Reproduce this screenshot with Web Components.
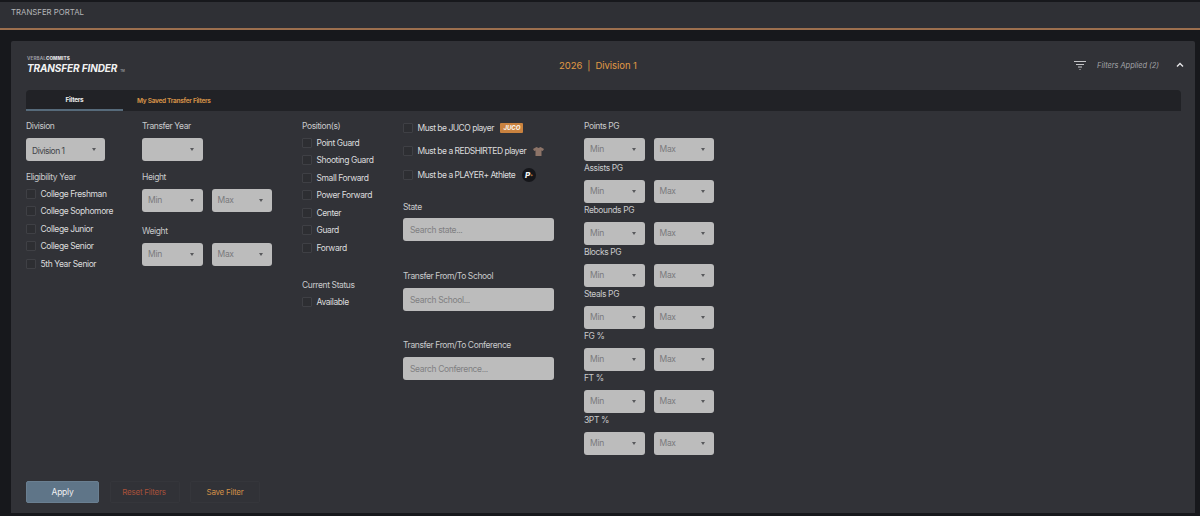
<!DOCTYPE html>
<html lang="en">
<head>
<meta charset="utf-8">
<title>Transfer Portal</title>
<style>
  html, body { margin: 0; padding: 0; height: 516px; overflow: hidden; background: #17181c; }
  body { font-family: Inter, "Liberation Sans", sans-serif; color: #d6d6d8; }
</style>
</head>
<body>
<portal-page></portal-page>
<script>
// small helper so each component is just a class with a css + html string
function comp(name, css, html) {
  class C extends HTMLElement {
    connectedCallback() {
      if (this.shadowRoot) return;
      this.attachShadow({ mode: 'open' });
      var a = {};
      for (var i = 0; i < this.attributes.length; i++) a[this.attributes[i].name] = this.attributes[i].value;
      this.shadowRoot.innerHTML = '<style>' + css + '</style>' + (typeof html === 'function' ? html(a) : html);
    }
  }
  customElements.define(name, C);
}

comp('top-bar', `
  :host { display: flex; align-items: center; height: 28px; margin-top: 2px; padding: 0 11px 6px; box-sizing: border-box;
          background: #2f3035; font-size: 7.8px; color: #b4b5b8; border-bottom: 2px solid #9c6f4e; }
`, `<span>TRANSFER PORTAL</span>`);

comp('finder-logo', `
  :host { display: block; line-height: 1; margin-top: -2px; margin-left: 1px; }
  .sm { font-size: 4.6px; font-weight: 700; letter-spacing: .1px; color: #9b9ca0; height: 6px; padding-top: 1px; }
  .sm b { color: #d8d8da; }
  .lg { font-size: 10px; font-weight: 700; font-style: italic; letter-spacing: -.12px; color: #f2f2f3; margin-top: 0.5px; }
  .tm { font-size: 3px; font-style: normal; color: #8a8b8f; margin-left: 3px; }
`, `<div class="sm">VERBAL<b>COMMITS</b></div><div class="lg">TRANSFER FINDER<span class="tm">TM</span></div>`);

comp('finder-header', `
  :host { display: flex; align-items: center; height: 49px; position: relative; }
  .mid { position: absolute; left: 0; right: 11px; margin-top: -1px; text-align: center; font-size: 9.5px; color: #e09a45; letter-spacing: -.05px; }
  .mid i { font-style: normal; margin: 0 5px; }
  .right { margin-left: auto; margin-right: -3px; margin-top: -1px; display: flex; align-items: center; font-size: 7.4px; font-style: italic; color: #a3a4a8; }
  .right svg { display: block; }
  .flt { margin-right: 11px; }
  .chev { margin-left: 17px; }
`, `<finder-logo></finder-logo>
  <div class="mid">2026<i>|</i>Division 1</div>
  <div class="right">
    <svg class="flt" width="12" height="10" viewBox="0 0 12 10" fill="none" stroke="#c4c5c8" stroke-width="1"><path d="M0 1.5h12M2 4.5h8M4 7h4M5.5 9.5h1"/></svg>
    <span>Filters Applied (2)</span>
    <svg class="chev" width="8" height="6" viewBox="0 0 8 6" fill="none" stroke="#e6e6e8" stroke-width="1.4"><path d="M1 4.5 4 1.5 7 4.5"/></svg>
  </div>`);

comp('finder-tabs', `
  :host { display: flex; height: 21px; background: #212226; border-radius: 4px 4px 0 0; font-size: 6.5px; font-weight: 700; letter-spacing: -.3px; }
  .tab { display: flex; align-items: center; justify-content: center; }
  .on { width: 97px; color: #eceded; border-bottom: 2px solid #566a7a; box-sizing: border-box; }
  .off { color: #d08f47; margin-left: 14px; }
`, `<div class="tab on">Filters</div><div class="tab off">My Saved Transfer Filters</div>`);

comp('f-label', `
  :host { display: block; font-size: 8.5px; line-height: 12px; height: 12px; color: #c9cacc; letter-spacing: -.4px; white-space: nowrap; }
`, `<slot></slot>`);

comp('f-select', `
  :host { display: inline-flex; align-items: center; justify-content: space-between; box-sizing: border-box; width: 60.5px; height: 22.5px; margin-top: 6px;
          background: #bcbcbc; border-radius: 3px; padding: 0 9px 0 6px; font-size: 8.5px; color: #7a7a7c; letter-spacing: -.3px; flex: none; }
  :host([val]) { color: #434448; letter-spacing: -.5px; }
  :host([val]) span { margin-top: 3px; }
  i { width: 0; height: 0; border: 2.5px solid transparent; border-top: 3px solid #58595c; border-bottom: 0; }
`, `<span><slot></slot></span><i></i>`);

comp('f-pair', `
  :host { display: flex; gap: 9px; }
`, `<f-select>Min</f-select><f-select>Max</f-select>`);

comp('f-check', `
  :host { display: flex; align-items: center; height: 17.5px; font-size: 8.5px; color: #dcdcde; letter-spacing: -.4px; white-space: nowrap; flex: none; }
  .box { width: 8px; height: 8px; margin-right: 4.5px; border: 1px solid #3f4045; background: #2d2e32; border-radius: 1px; flex: none; }
`, `<span class="box"></span><slot></slot>`);

comp('f-search', `
  :host { display: flex; align-items: center; box-sizing: border-box; width: 151px; height: 23px; margin-top: 5.5px; padding: 1px 7px 0; background: #bcbcbc; border-radius: 3px;
          font-size: 8.5px; color: #808082; letter-spacing: -.35px; flex: none; }
`, `<slot></slot>`);

comp('stat-row', `
  :host { display: block; height: 42px; }
`, a => `<f-label>${a.label}</f-label><f-pair></f-pair>`);

comp('filter-grid', `
  :host { display: flex; padding-top: 9px; height: 370px; box-sizing: border-box; }
  .col { flex: none; display: flex; flex-direction: column; }
  .c1 { width: 116px; }
  .c2 { width: 160px; }
  .c3 { width: 101px; }
  .c4 { width: 181px; }
  .juco { margin-left: 6.5px; background: #c9823f; color: #f6efe4; font-size: 6px; font-weight: 800; font-style: italic; padding: 2px 3px; border-radius: 1px; letter-spacing: 0; line-height: 6px; }
  svg { margin-left: 7px; display: block; }
  .pl { margin-left: 7px; width: 14px; height: 14px; border-radius: 50%; background: #15161a; color: #f2f2f3; font-size: 8px; font-weight: 800; font-style: italic;
        display: inline-flex; align-items: center; justify-content: center; letter-spacing: 0; }
  .pl sub { font-size: 4px; color: #c9823f; font-style: normal; line-height: 0; margin-top: 3px; vertical-align: baseline; }
  .chk4 { height: 23.5px; letter-spacing: -.5px; }
`, `
  <div class="col c1">
    <f-label>Division</f-label>
    <f-select val style="width:78.5px;margin-bottom:10.5px">Division 1</f-select>
    <f-label style="margin-bottom:2px">Eligibility Year</f-label>
    <f-check>College Freshman</f-check>
    <f-check>College Sophomore</f-check>
    <f-check>College Junior</f-check>
    <f-check>College Senior</f-check>
    <f-check>5th Year Senior</f-check>
  </div>
  <div class="col c2">
    <f-label>Transfer Year</f-label>
    <f-select style="margin-bottom:10.5px"></f-select>
    <f-label>Height</f-label>
    <f-pair style="margin-bottom:13.5px"></f-pair>
    <f-label>Weight</f-label>
    <f-pair></f-pair>
  </div>
  <div class="col c3">
    <f-label style="margin-bottom:2px">Position(s)</f-label>
    <f-check>Point Guard</f-check>
    <f-check>Shooting Guard</f-check>
    <f-check>Small Forward</f-check>
    <f-check>Power Forward</f-check>
    <f-check>Center</f-check>
    <f-check>Guard</f-check>
    <f-check>Forward</f-check>
    <f-label style="margin-top:22.5px;margin-bottom:2px">Current Status</f-label>
    <f-check>Available</f-check>
  </div>
  <div class="col c4">
    <f-check class="chk4" style="margin-top:-4px">Must be JUCO player<span class="juco">JUCO</span></f-check>
    <f-check class="chk4">Must be a REDSHIRTED player<svg width="11" height="9" viewBox="0 0 11 9"><path d="M3.5 0 5.5 1 7.5 0 11 2 9.8 4 8.5 3.4V9h-6V3.4L1.2 4 0 2Z" fill="#8d7468"/></svg></f-check>
    <f-check class="chk4">Must be a PLAYER+ Athlete<span class="pl">P<sub>+</sub></span></f-check>
    <f-label style="margin-top:14px">State</f-label>
    <f-search>Search state...</f-search>
    <f-label style="margin-top:29px">Transfer From/To School</f-label>
    <f-search>Search School...</f-search>
    <f-label style="margin-top:28.5px">Transfer From/To Conference</f-label>
    <f-search>Search Conference...</f-search>
  </div>
  <div class="col">
    <stat-row label="Points PG"></stat-row>
    <stat-row label="Assists PG"></stat-row>
    <stat-row label="Rebounds PG"></stat-row>
    <stat-row label="Blocks PG"></stat-row>
    <stat-row label="Steals PG"></stat-row>
    <stat-row label="FG %"></stat-row>
    <stat-row label="FT %"></stat-row>
    <stat-row label="3PT %"></stat-row>
  </div>`);

comp('filter-actions', `
  :host { display: flex; align-items: center; gap: 10px; font-size: 8px; letter-spacing: -.25px; }
  div { height: 22px; display: flex; align-items: center; justify-content: center; box-sizing: border-box; border-radius: 2px; }
  .apply { width: 73px; background: #5f7588; color: #eef0f2; border: 1px solid #6a7f91; font-size: 8.5px; }
  .reset { width: 70px; color: #a8513a; border: 1px solid #35363b; margin-left: 1px; padding-right: 2px; }
  .save { width: 70px; color: #d08f47; border: 1px solid #35363b; }
`, `<div class="apply">Apply</div><div class="reset">Reset Filters</div><div class="save">Save Filter</div>`);

comp('finder-panel', `
  :host { display: block; margin: 11px 5px 0 11px; height: 472px; background: #313237; box-sizing: border-box; padding: 0 14px 0 15px; border-radius: 2px 2px 0 0; }
`, `<finder-header></finder-header><finder-tabs></finder-tabs><filter-grid></filter-grid><filter-actions></filter-actions>`);

comp('portal-page', `
  :host { display: block; width: 1200px; height: 516px; background: #17181c; overflow: hidden; }
`, `<top-bar></top-bar><finder-panel></finder-panel>`);
</script>
</body>
</html>
